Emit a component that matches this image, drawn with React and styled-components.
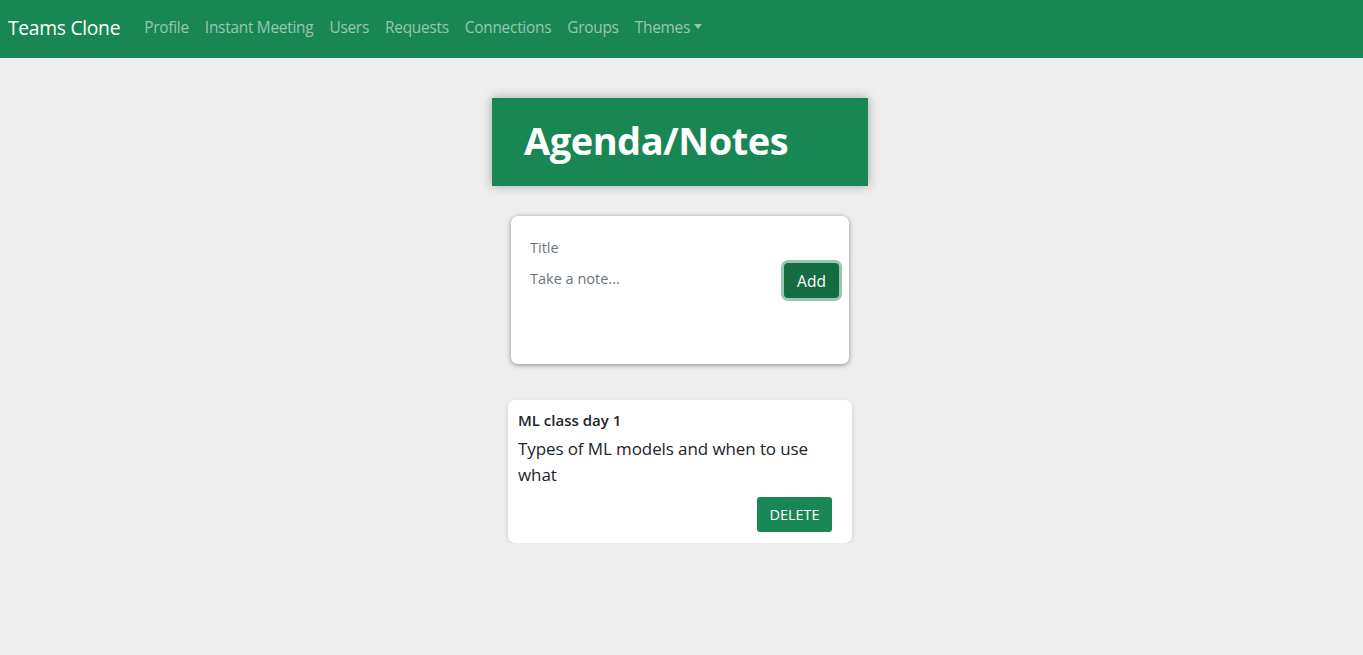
import React from "react";
import styled, { createGlobalStyle } from "styled-components";

const Global = createGlobalStyle`
  * { box-sizing: border-box; }
  html, body { margin: 0; padding: 0; }
  body {
    background: #eeeeee;
    font-family: "Open Sans", "Noto Sans", "Liberation Sans", sans-serif;
    color: #212529;
  }
`;

const Navbar = styled.nav`
  height: 58px;
  background: #198754;
  display: flex;
  align-items: center;
  padding: 0 8px 3px;
`;

const Brand = styled.a`
  color: #fff;
  font-size: 19.3px;
  margin-right: 16px;
  letter-spacing: -0.3px;
  text-decoration: none;
`;

const NavList = styled.ul`
  display: flex;
  list-style: none;
  margin: 0;
  padding: 0;
`;

const NavLink = styled.a`
  display: flex;
  align-items: center;
  gap: 4px;
  padding: 8px;
  color: rgba(255, 255, 255, 0.55);
  font-size: 15.4px;
  letter-spacing: -0.25px;
  text-decoration: none;
`;

const Caret = styled.span`
  width: 0;
  height: 0;
  border-left: 4.5px solid transparent;
  border-right: 4.5px solid transparent;
  border-top: 5px solid rgba(255, 255, 255, 0.55);
  margin-bottom: 3px;
`;

const Main = styled.main`
  display: flex;
  flex-direction: column;
  align-items: center;
  padding: 40px 3px 0 0;
`;

const Header = styled.header`
  width: 376px;
  height: 88px;
  background: #198754;
  box-shadow: 0 0 10px rgba(0, 0, 0, 0.3);
  display: flex;
  align-items: center;
  padding: 0 0 5px 32px;
`;

const Heading = styled.h1`
  margin: 0;
  color: #fff;
  font-size: 38px;
  font-weight: 700;
  letter-spacing: -0.5px;
`;

const Form = styled.form`
  margin-top: 30px;
  width: 338px;
  height: 148px;
  background: #fff;
  border-radius: 7px;
  box-shadow: 0 1px 5px rgb(138, 138, 138);
  padding: 19px 10px 15px 15px;
  display: grid;
  grid-template-columns: 1fr auto;
  grid-template-rows: auto 1fr;
  column-gap: 8px;
`;

const TitleInput = styled.input`
  grid-column: 1 / 3;
  border: none;
  outline: none;
  padding: 0 4px;
  height: 24px;
  font-size: 14.5px;
  font-family: inherit;
  color: #212529;
  &::placeholder { color: #6c757d; }
`;

const NoteArea = styled.textarea`
  border: none;
  outline: none;
  resize: none;
  padding: 4px;
  margin-top: 4px;
  font-size: 14.5px;
  font-family: inherit;
  line-height: 24px;
  height: 90px;
  color: #212529;
  &::placeholder { color: #6c757d; }
`;

const AddButton = styled.button`
  align-self: start;
  margin-top: 4px;
  width: 55px;
  height: 35px;
  border: none;
  border-radius: 4px;
  background: #146c43;
  color: #fff;
  font-size: 15.5px;
  font-family: inherit;
  box-shadow: 0 0 0 3px rgba(25, 135, 84, 0.45);
`;

const Note = styled.div`
  margin-top: 36px;
  width: 344px;
  background: #fff;
  border-radius: 7px;
  box-shadow: 0 2px 5px #ccc;
  padding: 10px 20px 11px 10px;
  display: flex;
  flex-direction: column;
`;

const NoteTitle = styled.h2`
  margin: 0 0 6px;
  font-size: 15px;
  font-weight: 600;
  line-height: 20px;
`;

const NoteText = styled.p`
  margin: 0 0 9px;
  font-size: 17px;
  line-height: 26px;
  max-width: 300px;
  letter-spacing: -0.1px;
`;

const DeleteButton = styled.button`
  align-self: flex-end;
  width: 75px;
  height: 35px;
  border: none;
  border-radius: 3px;
  background: #198754;
  color: #fff;
  font-size: 14.5px;
  font-family: inherit;
  text-transform: uppercase;
`;

const links = ["Profile", "Instant Meeting", "Users", "Requests", "Connections", "Groups"];

export default function App() {
  return (
    <>
      <Global />
      <Navbar>
        <Brand href="#">Teams Clone</Brand>
        <NavList>
          {links.map((l) => (
            <li key={l}>
              <NavLink href="#">{l}</NavLink>
            </li>
          ))}
          <li>
            <NavLink href="#">
              Themes
              <Caret />
            </NavLink>
          </li>
        </NavList>
      </Navbar>
      <Main>
        <Header>
          <Heading>Agenda/Notes</Heading>
        </Header>
        <Form onSubmit={(e) => e.preventDefault()}>
          <TitleInput placeholder="Title" />
          <NoteArea placeholder="Take a note..." rows={3} />
          <AddButton type="button">Add</AddButton>
        </Form>
        <Note>
          <NoteTitle>ML class day 1</NoteTitle>
          <NoteText>Types of ML models and when to use what</NoteText>
          <DeleteButton>Delete</DeleteButton>
        </Note>
      </Main>
    </>
  );
}
